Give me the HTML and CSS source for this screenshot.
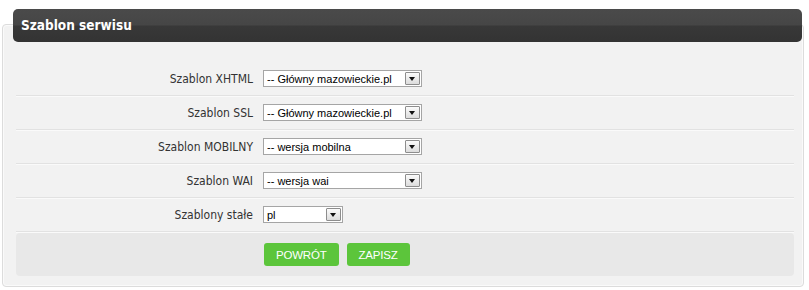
FILE: index.html
```html
<!DOCTYPE html>
<html lang="pl">
<head>
<meta charset="utf-8">
<title>Szablon serwisu</title>
<link rel="stylesheet" href="styles.css">
</head>
<body>
<div class="panel">
  <div class="header">Szablon serwisu</div>
  <form class="form">
    <div class="row">
      <span class="label">Szablon XHTML</span>
      <div class="select"><span class="value">-- Główny mazowieckie.pl</span><span class="arrow"></span></div>
    </div>
    <div class="row">
      <span class="label">Szablon SSL</span>
      <div class="select"><span class="value">-- Główny mazowieckie.pl</span><span class="arrow"></span></div>
    </div>
    <div class="row">
      <span class="label">Szablon MOBILNY</span>
      <div class="select"><span class="value">-- wersja mobilna</span><span class="arrow"></span></div>
    </div>
    <div class="row">
      <span class="label">Szablon WAI</span>
      <div class="select"><span class="value">-- wersja wai</span><span class="arrow"></span></div>
    </div>
    <div class="row last">
      <span class="label">Szablony stałe</span>
      <div class="select small"><span class="value">pl</span><span class="arrow"></span></div>
    </div>
    <div class="footer">
      <button type="button" class="btn">POWRÓT</button>
      <button type="button" class="btn">ZAPISZ</button>
    </div>
  </form>
</div>
</body>
</html>
```
FILE: styles.css
```css
html, body {
  margin: 0;
  padding: 0;
  background: #ffffff;
}
body {
  width: 809px;
  height: 290px;
  overflow: hidden;
}
.panel {
  margin: 24px 5px 0 2px;
  height: 261px;
  border: 1px solid #dcdcdc;
  border-radius: 4px;
  background: #f2f2f2;
  box-shadow: inset 0 0 0 1px #fafafa;
}
.header {
  margin: -16px 1px 0 10px;
  height: 33px;
  line-height: 33px;
  padding-left: 8px;
  border-radius: 5px;
  background: linear-gradient(to bottom, #4a4a4a 0, #464646 48%, #383838 52%, #333333 100%);
  color: #ffffff;
  font-family: "DejaVu Sans Condensed", "DejaVu Sans", sans-serif;
  font-stretch: condensed;
  font-weight: bold;
  font-size: 13.5px;
}
.form {
  margin: 20px 9px 0 13px;
}
.row {
  display: flex;
  align-items: center;
  height: 33px;
  border-bottom: 1px solid #e2e2e2;
  box-shadow: 0 1px 0 #fafafa;
}
.label {
  width: 237px;
  padding-right: 10px;
  text-align: right;
  color: #333333;
  font-family: "DejaVu Sans Condensed", "DejaVu Sans", sans-serif;
  font-stretch: condensed;
  font-size: 12px;
}
.select {
  display: flex;
  align-items: center;
  box-sizing: border-box;
  width: 159px;
  height: 17px;
  border: 1px solid #a5a5a5;
  background: #ffffff;
  padding: 0 1px 0 3px;
}
.select.small {
  width: 80px;
}
.value {
  flex: 1;
  color: #000000;
  font-family: "Liberation Sans", Arial, sans-serif;
  font-size: 11px;
  white-space: nowrap;
  overflow: hidden;
}
.arrow {
  position: relative;
  box-sizing: border-box;
  width: 15px;
  height: 13px;
  border: 1px solid #8d8d8d;
  border-radius: 1px;
  background: linear-gradient(to bottom, #fbfbfb, #dcdcdc);
}
.arrow::after {
  content: "";
  position: absolute;
  left: 3px;
  top: 4px;
  border-left: 3.5px solid transparent;
  border-right: 3.5px solid transparent;
  border-top: 4px solid #111111;
}
.footer {
  display: flex;
  align-items: center;
  gap: 8px;
  height: 43px;
  margin-top: 1px;
  padding-left: 248px;
  border-radius: 4px;
  background: #e8e8e8;
}
.btn {
  height: 23px;
  padding: 0 12px;
  border: 0;
  border-radius: 3px;
  background: #5cc53b;
  color: #ffffff;
  font-family: "Liberation Sans", Arial, sans-serif;
  font-size: 11.5px;
  letter-spacing: -0.2px;
  cursor: pointer;
}
```
